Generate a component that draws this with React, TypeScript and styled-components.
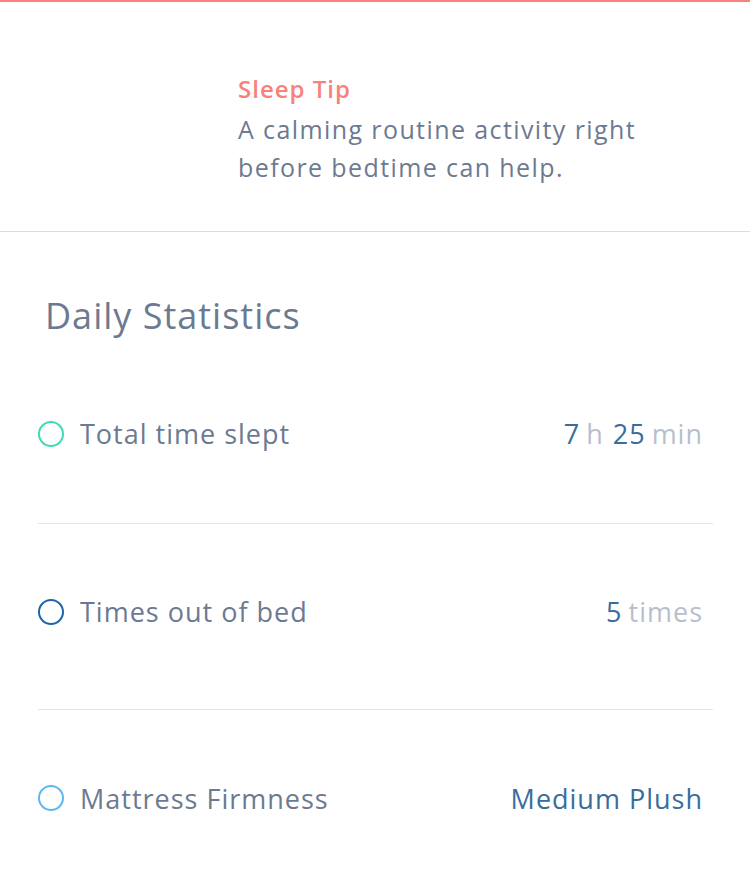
import styled, { createGlobalStyle } from 'styled-components';

const GlobalStyle = createGlobalStyle`
	body {
		margin: 0;
		background: #ffffff;
		font-family: 'Open Sans', 'Noto Sans', sans-serif;
	}
`;

interface StatProps {
	color: string;
	label: string;
	children: React.ReactNode;
	last?: boolean;
}

const StatRow = ({ color, label, children, last = false }: StatProps) => {
	return (
		<Row last={last}>
			<Dot color={color} />
			<Label>{label}</Label>
			<Value>{children}</Value>
		</Row>
	);
};

const App = () => {
	return (
		<Page>
			<GlobalStyle />
			<TipSection>
				<TipTitle>Sleep Tip</TipTitle>
				<TipText>A calming routine activity right before bedtime can help.</TipText>
			</TipSection>
			<StatsSection>
				<Heading>Daily Statistics</Heading>
				<StatRow color={'#3ddbb5'} label={'Total time slept'}>
					<Num>7</Num>
					<Unit>h</Unit>
					<Num>25</Num>
					<Unit>min</Unit>
				</StatRow>
				<StatRow color={'#1d64a8'} label={'Times out of bed'}>
					<Num>5</Num>
					<Unit>times</Unit>
				</StatRow>
				<StatRow color={'#5bb9ef'} label={'Mattress Firmness'} last>
					<Num>Medium Plush</Num>
				</StatRow>
			</StatsSection>
		</Page>
	);
};

const Page = styled.div`
	width: 750px;
	min-height: 886px;
	border-top: 2px solid #f8827d;
	box-sizing: border-box;
`;

const TipSection = styled.section`
	height: 230px;
	padding: 68px 40px 0 238px;
	box-sizing: border-box;
	border-bottom: 1px solid #cfe0ea;
`;

const TipTitle = styled.div`
	color: #fa817a;
	font-size: 24px;
	font-weight: 600;
	line-height: 38px;
	letter-spacing: 1px;
`;

const TipText = styled.p`
	margin: 2px 0 0;
	width: 440px;
	color: #6c7a91;
	font-size: 25px;
	line-height: 38px;
	letter-spacing: 1.4px;
`;

const StatsSection = styled.section`
	padding: 60px 37px 0 38px;
`;

const Heading = styled.h2`
	margin: 0 0 22px 7px;
	color: #6c7a91;
	font-size: 36px;
	font-weight: 400;
	line-height: 48px;
	letter-spacing: 1px;
`;

const Row = styled.div<{ last: boolean }>`
	display: flex;
	align-items: center;
	height: 186px;
	padding-bottom: 10px;
	box-sizing: border-box;
	border-bottom: ${({ last }) => (last ? 'none' : '1px solid #e2e4e8')};
	&:first-of-type {
		height: 162px;
		padding-bottom: 18px;
	}
`;

const Dot = styled.span<{ color: string }>`
	width: 22px;
	height: 22px;
	border-radius: 50%;
	border: 2px solid ${({ color }) => color};
	flex-shrink: 0;
`;

const Label = styled.span`
	margin-left: 16px;
	flex: 1;
	color: #6c7a91;
	font-size: 27px;
	letter-spacing: 1px;
`;

const Value = styled.span`
	display: flex;
	align-items: baseline;
	gap: 6px;
	padding-right: 10px;
	font-size: 27px;
	letter-spacing: 1px;
`;

const Num = styled.span`
	color: #3a6d9c;
`;

const Unit = styled.span`
	color: #b8bfcc;
	margin-right: 3px;
	&:last-child {
		margin-right: 0;
	}
`;

export default App;
